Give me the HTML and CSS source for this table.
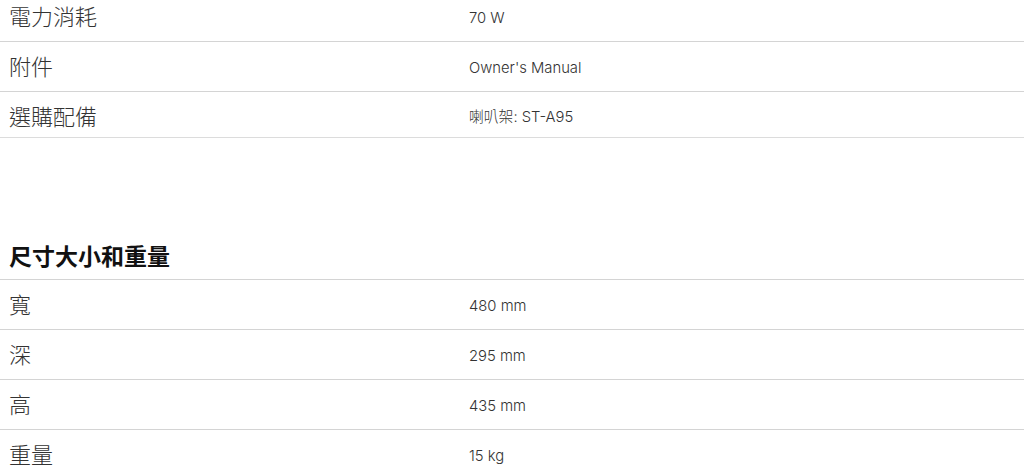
FILE: index.html
```html
<!DOCTYPE html>
<html lang="zh-Hant">
<head>
  <meta charset="UTF-8">
  <meta name="viewport" content="width=device-width, initial-scale=1.0">
  <title>規格</title>
  <link rel="stylesheet" href="styles.css">
</head>
<body>
  <div class="specs specs-top">
    <div class="spec-row">
      <div class="spec-label">電力消耗</div>
      <div class="spec-value">70 W</div>
    </div>
    <div class="spec-row">
      <div class="spec-label">附件</div>
      <div class="spec-value">Owner's Manual</div>
    </div>
    <div class="spec-row">
      <div class="spec-label">選購配備</div>
      <div class="spec-value">喇叭架: ST-A95</div>
    </div>
  </div>

  <h2 class="spec-title">尺寸大小和重量</h2>
  <div class="specs">
    <div class="spec-row">
      <div class="spec-label">寬</div>
      <div class="spec-value">480 mm</div>
    </div>
    <div class="spec-row">
      <div class="spec-label">深</div>
      <div class="spec-value">295 mm</div>
    </div>
    <div class="spec-row">
      <div class="spec-label">高</div>
      <div class="spec-value">435 mm</div>
    </div>
    <div class="spec-row">
      <div class="spec-label">重量</div>
      <div class="spec-value">15 kg</div>
    </div>
  </div>
</body>
</html>
```

FILE: styles.css
```css
body {
  margin: 0;
  font-family: Inter, "Noto Sans CJK TC", sans-serif;
  background-color: #fff;
  color: #1d1d1f;
}

.specs-top {
  margin-top: -8px;
}

.spec-row {
  display: grid;
  grid-template-columns: 460px 1fr;
  align-items: center;
  height: 50px;
  box-sizing: border-box;
  padding-left: 9px;
  border-bottom: 1px solid #d4d4d4;
}

.specs-top .spec-row:last-child {
  height: 46px;
  padding-top: 3px;
  border-bottom-color: #dcdcdc;
}

.spec-label {
  font-family: "Noto Sans CJK TC", sans-serif;
  font-size: 22px;
  font-weight: 300;
  line-height: 26px;
  color: #333;
  padding-bottom: 3px;
}

.spec-value {
  font-size: 14.8px;
  font-weight: 300;
  line-height: 20px;
  color: #333;
  padding-top: 2px;
}

.spec-title {
  margin: 101px 0 0;
  padding: 0 0 8px 9px;
  font-family: "Noto Sans CJK TC", sans-serif;
  font-size: 23px;
  font-weight: 700;
  line-height: 32px;
  color: #111;
  border-bottom: 1px solid #d4d4d4;
}
```
